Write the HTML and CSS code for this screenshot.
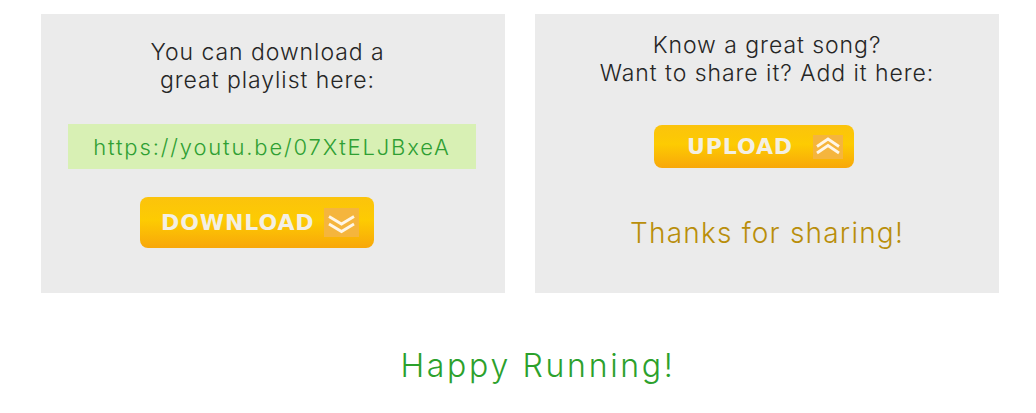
FILE: index.html
```html
<!DOCTYPE html>
<html>
<head>
<meta charset="utf-8">
<link rel="stylesheet" href="styles.css">
</head>
<body>
<div class="page">
  <div class="panels">
    <section class="panel panel-download">
      <p class="intro">You can download a<br>great playlist here:</p>
      <div class="link-box">https://youtu.be/07XtELJBxeA</div>
      <a class="btn btn-download" href="#">
        <span class="btn-label">DOWNLOAD</span>
        <span class="btn-icon">
          <svg width="35" height="29" viewBox="0 0 35 29"><polyline points="5,8.5 17.5,16 30,8.5" /><polyline points="5,16 17.5,23.5 30,16" /></svg>
        </span>
      </a>
    </section>
    <section class="panel panel-upload">
      <p class="intro">Know a great song?<br>Want to share it? Add it here:</p>
      <a class="btn btn-upload" href="#">
        <span class="btn-label">UPLOAD</span>
        <span class="btn-icon">
          <svg width="30" height="24" viewBox="0 0 30 24"><polyline points="4,11.5 15,4 26,11.5" /><polyline points="4,18 15,10.5 26,18" /></svg>
        </span>
      </a>
      <p class="thanks">Thanks for sharing!</p>
    </section>
  </div>
  <p class="footer">Happy Running!</p>
</div>
</body>
</html>
```

FILE: styles.css
```css
* { box-sizing: border-box; }
body {
  margin: 0;
  background: #ffffff;
  font-family: "Inter", "Open Sans", sans-serif;
  font-weight: 300;
  color: #262626;
}
.page {
  padding: 14px 0 0 41px;
}
.panels {
  display: flex;
  gap: 30px;
}
.panel {
  width: 464px;
  height: 279px;
  background: #ebebeb;
  display: flex;
  flex-direction: column;
  align-items: center;
}
.intro {
  margin: 0;
  font-size: 23px;
  line-height: 28px;
  letter-spacing: 0.95px;
  text-align: center;
}
.panel-download .intro { margin: 24px 11px 0 0; }
.panel-upload .intro { margin-top: 17px; }
.link-box {
  margin-top: 30px;
  width: 408px;
  height: 45px;
  margin-left: -2px;
  background: #d8f0b4;
  color: #2f9f33;
  font-size: 22px;
  letter-spacing: 1.85px;
  display: flex;
  align-items: center;
  justify-content: center;
}
.btn {
  display: flex;
  align-items: center;
  align-self: flex-start;
  text-decoration: none;
  border-radius: 8px;
  background: linear-gradient(#fbc30c 0%, #fdcb02 45%, #f8a70a 100%);
  color: #f3efe4;
  font-family: "DejaVu Sans", sans-serif;
  font-weight: bold;
  font-size: 22px;
  letter-spacing: 0.9px;
}
.btn-download {
  margin: 28px 0 0 99px;
  width: 234px;
  height: 51px;
  padding-left: 21px;
}
.btn-upload {
  margin: 38px 0 0 119px;
  width: 200px;
  height: 43px;
  padding-left: 33px;
}
.btn-label { line-height: 1; }
.btn-icon {
  display: flex;
  background: #f5b53d;
}
.btn-download .btn-icon { margin-left: 10px; }
.btn-upload .btn-icon { margin-left: 20px; }
.btn-icon svg polyline {
  fill: none;
  stroke: #fff6e6;
  stroke-width: 2.8;
}
.thanks {
  margin: 48px 0 0;
  font-size: 28px;
  letter-spacing: 1.2px;
  color: #b98e0a;
}
.footer {
  margin: 53px 0 0;
  width: 958px;
  padding-left: 36px;
  font-size: 32px;
  letter-spacing: 2.7px;
  color: #2ca12c;
  text-align: center;
}
```
